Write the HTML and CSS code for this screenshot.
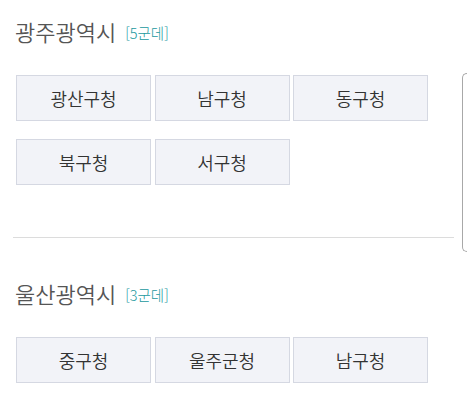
FILE: index.html
```html
<!DOCTYPE html>
<html lang="ko">
<head>
<meta charset="utf-8">
<link rel="stylesheet" href="styles.css">
</head>
<body>
<div class="page">
  <section class="region">
    <h2 class="region-title">광주광역시 <span class="count">[5군데]</span></h2>
    <div class="grid">
      <button class="item">광산구청</button>
      <button class="item">남구청</button>
      <button class="item">동구청</button>
      <button class="item">북구청</button>
      <button class="item">서구청</button>
    </div>
  </section>
  <hr class="divider">
  <section class="region">
    <h2 class="region-title">울산광역시 <span class="count">[3군데]</span></h2>
    <div class="grid">
      <button class="item">중구청</button>
      <button class="item">울주군청</button>
      <button class="item">남구청</button>
    </div>
  </section>
  <div class="side-panel"></div>
</div>
</body>
</html>
```
FILE: styles.css
```css
html, body {
  margin: 0;
  padding: 0;
  background: #ffffff;
  overflow: hidden;
}
body {
  font-family: "Noto Sans CJK KR", "Noto Sans", sans-serif;
  width: 467px;
  height: 412px;
}
.page {
  position: relative;
  width: 467px;
  height: 412px;
  overflow: hidden;
}
.region {
  padding: 16px 0 0 16px;
}
.region-title {
  margin: 0 0 29px -1px;
  height: 30px;
  line-height: 30px;
  font-size: 22px;
  font-weight: 350;
  color: #555555;
  display: flex;
  align-items: center;
}
.count {
  font-size: 14.5px;
  font-weight: 300;
  color: #22989e;
  margin-left: 9px;
  padding-top: 3px;
}
.grid {
  display: grid;
  grid-template-columns: repeat(3, 135px);
  column-gap: 3.5px;
  row-gap: 18px;
}
.item {
  height: 46px;
  margin: 0;
  padding: 0;
  background: #f2f3f8;
  border: 1px solid #d5d8e2;
  border-radius: 0;
  font-family: "Noto Sans CJK KR", "Noto Sans", sans-serif;
  font-size: 18px;
  font-weight: 350;
  color: #333333;
  box-sizing: border-box;
}
.divider {
  margin: 52px 0 24px 13px;
  width: 441px;
  border: 0;
  border-top: 1px solid #dcdcdc;
  height: 0;
}
.side-panel {
  position: absolute;
  left: 462px;
  top: 73px;
  width: 5px;
  height: 179px;
  border: 1px solid #a8a8a8;
  border-right: 0;
  border-radius: 6px 0 0 6px;
  box-sizing: border-box;
}
```
